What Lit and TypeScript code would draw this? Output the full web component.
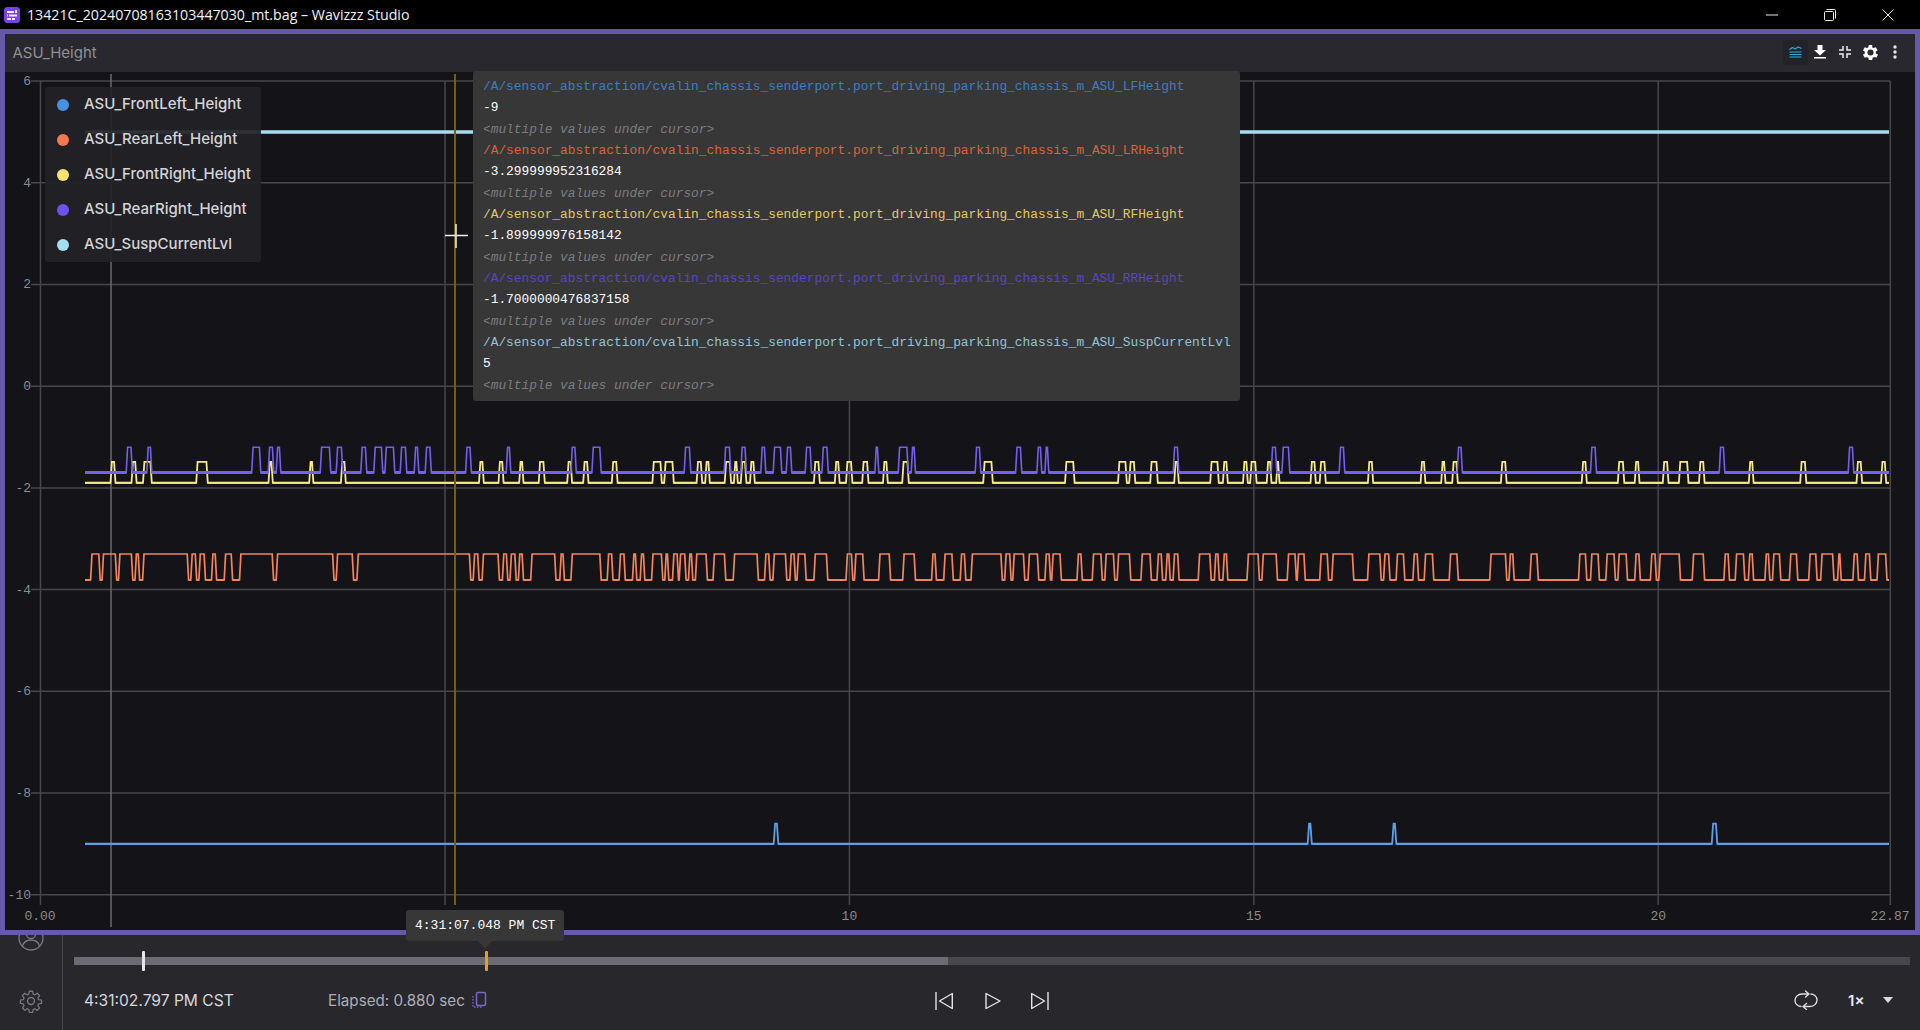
import { LitElement, html, css, svg } from 'lit';
import { customElement } from 'lit/decorators.js';

// plot mapping, in page pixels
const xOf = (t: number) => 40.6 + t * 80.88;
const yOf = (v: number) => 81 + (6 - v) * 50.86;
const X_START = 85;
const X_END = 1889;

type Pulse = [number, number];

const PURPLE: Pulse[] = [[127,131.6],[147.6,151],[252.5,260],[269,273],[277,280],[321,330],[337,342],[361.6,366],[374.6,382],[385.7,394],[401,406],[415,418],[426,430.5],[466.4,470.6],[507,510],[571.7,575.5],[592.7,600.4],[685,690],[725,730],[741.6,745.6],[761.6,765],[774,781],[787,791],[806,810.7],[822.7,827.5],[875.7,878],[899,907.5],[912,914.7],[976,980],[1016.4,1021],[1037.7,1041],[1045.7,1048],[1174,1178],[1272,1276],[1282.7,1289],[1340,1344],[1458,1461.6],[1591.3,1595.7],[1720,1724],[1849,1853]];

const YELLOW: Pulse[] = [[111.3,114.7],[132.3,135.8],[143.8,151],[197,207],[269.3,272],[310,312.6],[341.7,345],[479.8,483],[499.3,502.8],[520,522.7],[539.5,544],[568,571.3],[584,587.7],[612.6,616.8],[653.2,661],[665,673],[697.4,701.4],[706,709],[725.5,730.3],[734.7,737],[741.6,745.6],[750.8,754],[814.7,819],[835.6,838.8],[846.8,851.6],[863,867.7],[883.8,887],[903,908],[984,992],[1065.8,1073.8],[1118.8,1126],[1130,1134.5],[1151,1157],[1175,1178],[1211,1218],[1223.7,1227],[1243.8,1247],[1251,1255.8],[1267.5,1270.7],[1277,1278.7],[1311.3,1315],[1320.5,1325],[1368.7,1372.4],[1421.4,1424.6],[1442,1444.7],[1453,1457],[1501.7,1505.8],[1582.5,1586],[1618.6,1623.5],[1635.5,1638.7],[1663.6,1667.7],[1679.7,1687.7],[1699.8,1703.8],[1749.6,1752.8],[1801,1805.5],[1857.3,1861.3],[1881.8,1885.4]];

const ORANGE: Pulse[] = [[91.4,99.4],[102.9,115.9],[119.3,132],[135.8,138.8],[143.4,187.8],[191.6,195.9],[199.7,204.7],[212.3,215.8],[225,231.8],[240.3,272.8],[277,333.2],[337,352.8],[357.7,470],[474,478.3],[482.9,498.6],[503.2,507],[510.8,515.4],[519.2,522.7],[531.5,555.2],[560.6,563.6],[571.7,600.4],[608,612.2],[619.9,624.5],[633.3,636],[641,644],[652.4,662],[665.6,668],[673.3,677.7],[680,685.3],[689.3,692],[696.2,706.6],[713.8,725],[734,757.6],[765.3,769.3],[773.7,786],[790.6,794.6],[797.8,805.4],[814.7,827],[846.8,852],[855.3,863.3],[879.4,889.8],[903.5,914.7],[932.4,935.6],[944.5,952.5],[961,965],[971.8,1001.5],[1005.5,1010.3],[1013.6,1024],[1028.8,1038],[1045.7,1049.7],[1052.5,1060.6],[1077.8,1081.5],[1093,1101.5],[1105.6,1114],[1118,1130],[1141.7,1150.6],[1157.8,1161.8],[1166.6,1169.4],[1173.9,1178.3],[1199,1210.4],[1215.2,1218.5],[1223.7,1227],[1247.8,1258.6],[1262.7,1276.7],[1288,1295.6],[1298,1304.5],[1320.5,1327.8],[1332.6,1353],[1368.3,1380.4],[1384.4,1389.2],[1396.9,1404],[1413.7,1417.8],[1425,1433],[1450,1457.5],[1490.5,1506],[1509.8,1513.4],[1530.7,1537.5],[1579.3,1586],[1591.3,1598.6],[1606.6,1614.6],[1618.6,1626.7],[1635.5,1639.5],[1651.2,1655.6],[1659.6,1679.7],[1693,1703.8],[1724.7,1728.7],[1736,1744],[1749.2,1752.8],[1765.7,1769],[1773.3,1780],[1790.2,1797],[1809.5,1816.3],[1821.5,1833.2],[1838.4,1840.4],[1853.7,1857.7],[1865.3,1870],[1877.8,1886.2]];

const BLUE: Pulse[] = [[774.5,777.5],[1308.5,1311],[1393,1395.5],[1712.5,1716.5]];

const SERIES = [
  { name: 'ASU_FrontLeft_Height', color: '#4a90e2', line: '#5aa0ea', tip: '#3f7cc0', topic: 'ASU_LFHeight', value: '-9', low: -9, high: -8.6, width: 1.8, base: 2.2, pulses: BLUE },
  { name: 'ASU_RearLeft_Height', color: '#f5774d', line: '#f48559', tip: '#d8643c', topic: 'ASU_LRHeight', value: '-3.299999952316284', low: -3.81, high: -3.3, width: 1.7, base: 2, pulses: ORANGE },
  { name: 'ASU_FrontRight_Height', color: '#f8e36f', line: '#f6e986', tip: '#e0cb62', topic: 'ASU_RFHeight', value: '-1.899999976158142', low: -1.9, high: -1.49, width: 1.8, base: 2, pulses: YELLOW },
  { name: 'ASU_RearRight_Height', color: '#6e50f0', line: '#7560ee', tip: '#5a45c4', topic: 'ASU_RRHeight', value: '-1.7000000476837158', low: -1.7, high: -1.2, width: 1.6, base: 3, pulses: PURPLE },
  { name: 'ASU_SuspCurrentLvl', color: '#a6dcef', line: '#a6dcef', tip: '#93c4d6', topic: 'ASU_SuspCurrentLvl', value: '5', low: 5, high: 5, width: 3, base: 3, pulses: [] as Pulse[] },
];

function linePoints(low: number, high: number, pulses: Pulse[]) {
  const yl = yOf(low).toFixed(1);
  const yh = yOf(high).toFixed(1);
  const pts = [`${X_START},${yl}`];
  for (const [a, b] of pulses) {
    pts.push(`${a - 0.8},${yl}`, `${a + 0.6},${yh}`, `${b - 0.6},${yh}`, `${b + 0.8},${yl}`);
  }
  pts.push(`${X_END},${yl}`);
  return pts.join(' ');
}

// the flat low runs read heavier than the edges, so they get their own stroke
function lowRuns(low: number, pulses: Pulse[]) {
  const y = yOf(low).toFixed(1);
  let d = `M${X_START} ${y}`;
  for (const [a, b] of pulses) {
    d += `H${a - 0.8}M${b + 0.8} ${y}`;
  }
  return `${d}H${X_END}`;
}

@customElement('signal-plot')
export class SignalPlot extends LitElement {
  static styles = css`
    :host {
      display: block;
      position: relative;
      height: 858px;
      background: #131318;
    }
    svg {
      display: block;
    }
    .tick {
      font: 13px 'Liberation Mono', monospace;
      fill: #8b8b90;
    }
    .legend {
      position: absolute;
      left: 40px;
      top: 15px;
      width: 216px;
      height: 175px;
      margin: 0;
      padding: 0;
      box-sizing: border-box;
      background: rgba(34, 34, 39, 0.92);
      border-radius: 3px;
      list-style: none;
      display: flex;
      flex-direction: column;
      justify-content: center;
    }
    .legend li {
      display: flex;
      align-items: center;
      gap: 15px;
      height: 35px;
      padding-left: 12px;
      font: 500 15px/1 Inter, sans-serif;
      color: #d4d4d6;
    }
    .legend li span.label {
      position: relative;
      top: -1px;
    }
    .dot {
      width: 12px;
      height: 12px;
      border-radius: 50%;
      flex: none;
    }
    .hover {
      position: absolute;
      left: 468px;
      top: -1px;
      width: 767px;
      height: 330px;
      box-sizing: border-box;
      padding: 5px 10px;
      background: #373737;
      border-radius: 3px;
      font: 12.85px/21.33px 'Liberation Mono', monospace;
      color: #fff;
      z-index: 2;
      white-space: nowrap;
    }
    .hover .multi {
      font-style: italic;
      color: #7c7c7c;
    }
  `;

  render() {
    const vLines = [5, 10, 15, 20, 22.87].map(xOf);
    const yTicks = [6, 4, 2, 0, -2, -4, -6, -8, -10];
    return html`
      <svg width="1910" height="858" viewBox="5 72 1910 858">
        ${yTicks.map((v) => svg`
          <line x1="31" x2="1890" y1=${yOf(v)} y2=${yOf(v)} stroke="#47474b" stroke-width="1.5"></line>
          <text class="tick" x="31" y=${yOf(v) + 4} text-anchor="end">${v}</text>
        `)}
        <line x1="40.5" x2="40.5" y1="81" y2="905" stroke="#47474b" stroke-width="1.5"></line>
        ${vLines.map((x) => svg`
          <line x1=${x} x2=${x} y1="81" y2="905" stroke="#47474b" stroke-width="1.5"></line>
        `)}
        <text class="tick" x="40" y="920" text-anchor="middle">0.00</text>
        <text class="tick" x=${xOf(10)} y="920" text-anchor="middle">10</text>
        <text class="tick" x=${xOf(15)} y="920" text-anchor="middle">15</text>
        <text class="tick" x=${xOf(20)} y="920" text-anchor="middle">20</text>
        <text class="tick" x="1890" y="920" text-anchor="middle">22.87</text>
        <line x1="111" x2="111" y1="74" y2="927" stroke="#6a6a6e" stroke-width="1.5"></line>
        ${SERIES.map((s) => svg`
          <polyline points=${linePoints(s.low, s.high, s.pulses)} fill="none" stroke=${s.line} stroke-width=${s.width}></polyline>
          <path d=${lowRuns(s.low, s.pulses)} fill="none" stroke=${s.line} stroke-width=${s.base}></path>
        `)}
        <line x1="455" x2="455" y1="74" y2="905" stroke="#7d5c08" stroke-width="2"></line>
        <path d="M445 235.5H468M456 224V248" stroke="#f0f0f0" stroke-width="1.5" fill="none"></path>
      </svg>
      <ul class="legend">
        ${SERIES.map((s) => html`
          <li><span class="dot" style="background:${s.color}"></span><span class="label">${s.name}</span></li>
        `)}
      </ul>
      <div class="hover">
        ${SERIES.map((s) => html`
          <div style="color:${s.tip}">/A/sensor_abstraction/cvalin_chassis_senderport.port_driving_parking_chassis_m_${s.topic}</div>
          <div>${s.value}</div>
          <div class="multi">&lt;multiple values under cursor&gt;</div>
        `)}
      </div>
    `;
  }
}

@customElement('playback-bar')
export class PlaybackBar extends LitElement {
  static styles = css`
    :host {
      display: flex;
      position: relative;
      height: 95px;
      background: #27272c;
      font-family: Inter, sans-serif;
    }
    .rail {
      width: 63px;
      flex: none;
      border-right: 1px solid #47474d;
      overflow: hidden;
      display: flex;
      flex-direction: column;
      align-items: center;
      justify-content: flex-end;
      gap: 37px;
      padding-bottom: 16px;
      box-sizing: border-box;
    }
    .rail svg {
      flex: none;
    }
    .body {
      flex: 1;
      padding: 22px 10px 0 11px;
    }
    .track {
      position: relative;
      height: 8px;
      background: #47474d;
    }
    .played {
      height: 100%;
      background: #6b6a75;
    }
    .mark {
      position: absolute;
      top: -6px;
      width: 3px;
      height: 20px;
      border-radius: 1px;
      margin-left: -1.5px;
    }
    .time-tip {
      position: absolute;
      top: -47px;
      left: 332px;
      height: 31px;
      padding: 0 9px;
      display: flex;
      align-items: center;
      background: #373737;
      border-radius: 3px;
      color: #fff;
      font: 13px 'Liberation Mono', monospace;
      white-space: nowrap;
    }
    .time-tip::after {
      content: '';
      position: absolute;
      left: 72px;
      bottom: -8px;
      border: 7px solid transparent;
      border-bottom: 0;
      border-top: 8px solid #373737;
    }
    .controls {
      display: grid;
      grid-template-columns: 1fr auto 1fr;
      align-items: center;
      height: 50px;
      margin-top: 10px;
    }
    .left,
    .right,
    .center {
      display: flex;
      align-items: center;
    }
    .clock {
      font-size: 15.6px;
      color: #d6d8dc;
      margin-left: 10px;
      width: 244px;
      flex: none;
    }
    .elapsed {
      font-size: 15.2px;
      color: #aeaeb4;
      margin-right: 6px;
    }
    .center {
      padding-top: 2px;
    }
    .center svg + svg {
      margin-left: 32px;
    }
    .center svg:last-child {
      margin-left: 30px;
    }
    .right {
      justify-content: flex-end;
      padding-right: 17px;
    }
    .speed {
      font-size: 15px;
      font-weight: 600;
      color: #e8e8ea;
      margin: 0 18.5px 0 30px;
    }
    .caret {
      width: 0;
      height: 0;
      border: 5.5px solid transparent;
      border-bottom: 0;
      border-top: 6px solid #dcdcdc;
    }
  `;

  render() {
    return html`
      <div class="rail">
        <svg width="26" height="26" viewBox="0 0 26 26" fill="none" stroke="#77777d" stroke-width="1.3">
          <circle cx="13" cy="13" r="12"></circle>
          <circle cx="13" cy="9" r="4.5"></circle>
          <path d="M4.5 21c1.5-5 5-6 8.5-6s7 1 8.5 6"></path>
        </svg>
        <svg width="26" height="26" viewBox="0 0 24 24" fill="none" stroke="#77777d" stroke-width="1.3" stroke-linejoin="round">
          <circle cx="12" cy="12" r="3.2"></circle>
          <path d="M10.3 2h3.4l.5 2.9 1.8.8 2.4-1.7 2.4 2.4-1.7 2.4.8 1.8 2.9.5v3.4l-2.9.5-.8 1.8 1.7 2.4-2.4 2.4-2.4-1.7-1.8.8-.5 2.9h-3.4l-.5-2.9-1.8-.8-2.4 1.7-2.4-2.4 1.7-2.4-.8-1.8-2.9-.5v-3.4l2.9-.5.8-1.8-1.7-2.4 2.4-2.4 2.4 1.7 1.8-.8z" transform="translate(1.2 1.2) scale(.9)"></path>
        </svg>
      </div>
      <div class="body">
        <div class="track">
          <div class="played" style="width:${948 - 74}px"></div>
          <div class="mark" style="left:${143.7 - 74}px;background:#e6e6e8"></div>
          <div class="mark" style="left:${486 - 74}px;background:#e8a20c"></div>
          <div class="time-tip">4:31:07.048 PM CST</div>
        </div>
        <div class="controls">
          <div class="left">
            <span class="clock">4:31:02.797 PM CST</span>
            <span class="elapsed">Elapsed: 0.880 sec</span>
            <svg width="16" height="18" viewBox="0 0 16 18" fill="none" stroke="#7a68c8" stroke-width="1.5">
              <rect x="5.5" y="1.5" width="9" height="13" rx="1.5"></rect>
              <path d="M2 5v11h9" stroke-dasharray="1.5 1.5" stroke-width="1.3"></path>
            </svg>
          </div>
          <div class="center">
            <svg width="18" height="18" viewBox="0 0 18 18" fill="none" stroke="#e4e4e6" stroke-width="1.4" stroke-linejoin="round">
              <path d="M1 0v18M17.300 1.500v15L4.500 9z"></path>
            </svg>
            <svg width="16" height="18" viewBox="0 0 16 18" fill="none" stroke="#e4e4e6" stroke-width="1.4" stroke-linejoin="round">
              <path d="M1 1.500v15L15 9z"></path>
            </svg>
            <svg width="18" height="18" viewBox="0 0 18 18" fill="none" stroke="#e4e4e6" stroke-width="1.4" stroke-linejoin="round">
              <path d="M17 0v18M.700 1.500v15L13.500 9z"></path>
            </svg>
          </div>
          <div class="right">
            <svg width="24" height="20" viewBox="0 0 24 20" fill="none" stroke="#dcdcde" stroke-width="1.4" stroke-linecap="round" stroke-linejoin="round">
              <path d="M7 16.5C3.500 16 1 13.500 1 10.500S3.500 4 8 4h6.500M11.500 1l3.500 3-3.500 3"></path>
              <path d="M17 4c3.500.5 6 3 6 6s-2.500 6.500-7 6.500H9.500M12.500 13.500l-3.500 3 3.500 3"></path>
            </svg>
            <span class="speed">1×</span>
            <span class="caret"></span>
          </div>
        </div>
      </div>
    `;
  }
}

@customElement('app-root')
export class AppRoot extends LitElement {
  static styles = css`
    :host {
      display: flex;
      flex-direction: column;
      width: 1920px;
      height: 1030px;
      overflow: hidden;
      background: #27272c;
    }
    .titlebar {
      display: flex;
      align-items: center;
      height: 29px;
      flex: none;
      padding-right: 3px;
      background: #000;
      color: #f2f2f2;
      font: 14.2px 'Open Sans', sans-serif;
    }
    .logo {
      margin: 0 7px 0 4px;
      flex: none;
    }
    .title {
      flex: 1;
    }
    .win {
      display: flex;
      align-items: center;
      justify-content: center;
      width: 58px;
      height: 29px;
    }
    .panel {
      height: 906px;
      flex: none;
      box-sizing: border-box;
      border: 5px solid #665aa8;
      position: relative;
    }
    .panel-head {
      display: flex;
      align-items: center;
      height: 38px;
      padding: 0 7.5px 2px 7.5px;
      box-sizing: border-box;
      background: #28282e;
    }
    .panel-title {
      flex: 1;
      font: 15px Inter, sans-serif;
      color: #8f8f94;
    }
    .tool {
      display: flex;
      align-items: center;
      justify-content: center;
      width: 25px;
      height: 25px;
    }
    .tool.on {
      background: #222227;
      border-radius: 3px;
    }
  `;

  render() {
    return html`
      <div class="titlebar">
        <svg class="logo" width="16" height="16" viewBox="0 0 16 16">
          <rect width="16" height="16" rx="3.500" fill="#7a42ee"></rect>
          <path d="M3 4h7v2H3zM11 3h2v3h-2zM5 7.500h8v2H5zM3 7.500h1v2H3zM3 11h4v2H3zM8 11h3v2H8z" fill="#f2ecff"></path>
        </svg>
        <span class="title">13421C_20240708163103447030_mt.bag – Wavizzz Studio</span>
        <span class="win">
          <svg width="12" height="2" viewBox="0 0 12 2"><path d="M0 1h12" stroke="#e8e8e8"></path></svg>
        </span>
        <span class="win">
          <svg width="12" height="12" viewBox="0 0 12 12" fill="none" stroke="#e8e8e8">
            <rect x=".5" y="2.500" width="9" height="9" rx="1"></rect>
            <path d="M2.500 .5h8a1 1 0 0 1 1 1v8"></path>
          </svg>
        </span>
        <span class="win">
          <svg width="12" height="12" viewBox="0 0 12 12" stroke="#e8e8e8"><path d="M.5 .5l11 11M11.500 .5l-11 11"></path></svg>
        </span>
      </div>
      <div class="panel">
        <div class="panel-head">
          <span class="panel-title">ASU_Height</span>
          <span class="tool on">
            <svg width="13" height="12" viewBox="0 0 13 12" fill="none" stroke="#2aa9d8" stroke-width="1.2">
              <path d="M.5 3.500l3-2 2.500 1.500 3-2 3.500 1.500M.5 6h12M.5 8.500h12M.5 11h12"></path>
            </svg>
          </span>
          <span class="tool">
            <svg width="12" height="14" viewBox="0 0 12 14" fill="#fff">
              <path d="M3.500 0h5v5H12L6 10.500 0 5h3.500zM0 12h12v1.500H0z"></path>
            </svg>
          </span>
          <span class="tool">
            <svg width="12" height="12" viewBox="0 0 12 12" fill="none" stroke="#f0f0f0" stroke-width="1.5">
              <path d="M4 0v4H0M8 0v4h4M4 12V8H0M8 12V8h4"></path>
            </svg>
          </span>
          <span class="tool">
            <svg width="21" height="21" viewBox="0 0 24 24" fill="#fff">
              <path d="M19.400 13a7.800 7.800 0 0 0 0-2l2.100-1.600-2-3.500-2.500 1a7.500 7.500 0 0 0-1.700-1L15.400 3.300h-4l-.4 2.600a7.500 7.500 0 0 0-1.700 1l-2.500-1-2 3.500L6.900 11a7.800 7.800 0 0 0 0 2l-2.100 1.600 2 3.500 2.500-1a7.500 7.500 0 0 0 1.700 1l.4 2.600h4l.4-2.600a7.500 7.500 0 0 0 1.700-1l2.500 1 2-3.500zM13.400 15.500a3.500 3.500 0 1 1 0-7 3.500 3.500 0 0 1 0 7z" transform="translate(-1.400)"></path>
            </svg>
          </span>
          <span class="tool">
            <svg width="4" height="14" viewBox="0 0 4 14" fill="#e6e6e6">
              <circle cx="2" cy="2" r="1.700"></circle>
              <circle cx="2" cy="7" r="1.700"></circle>
              <circle cx="2" cy="12" r="1.700"></circle>
            </svg>
          </span>
        </div>
        <signal-plot></signal-plot>
      </div>
      <playback-bar></playback-bar>
    `;
  }
}
